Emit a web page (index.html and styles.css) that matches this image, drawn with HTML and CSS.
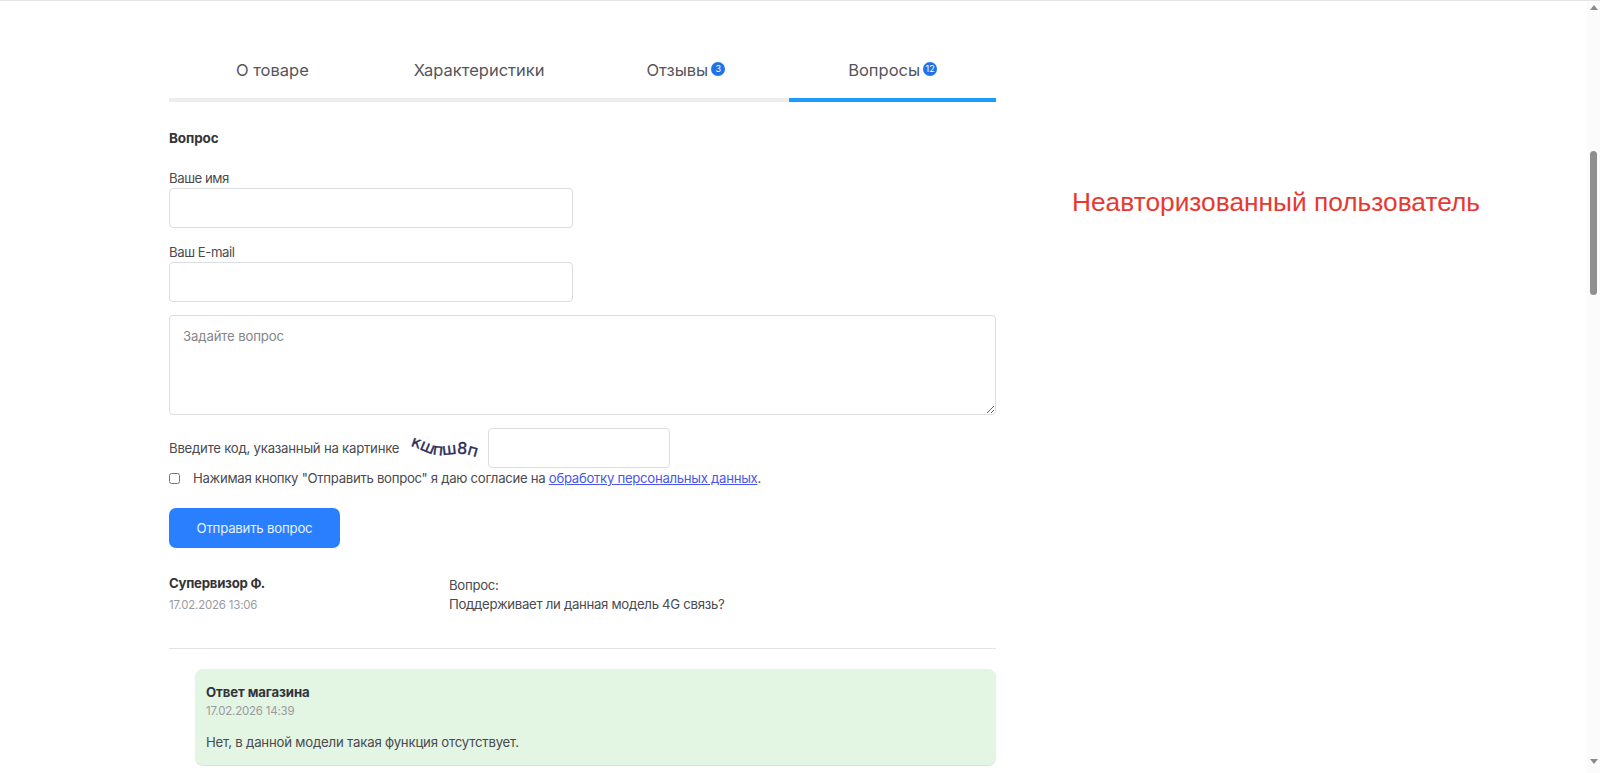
FILE: index.html
```html
<!DOCTYPE html>
<html lang="ru">
<head>
<meta charset="utf-8">
<title>Вопросы</title>
<link rel="stylesheet" href="styles.css">
</head>
<body>
<div class="page">
  <main class="content">
    <section class="product">
      <nav class="tabs">
        <a class="tab">О товаре</a>
        <a class="tab">Характеристики</a>
        <a class="tab">Отзывы<span class="badge">3</span></a>
        <a class="tab tab-active">Вопросы<span class="badge">12</span></a>
      </nav>
      <form class="form">
        <h3 class="form-title">Вопрос</h3>
        <label class="field-label">Ваше имя</label>
        <input class="input input-half" type="text">
        <label class="field-label field-email">Ваш E-mail</label>
        <input class="input input-half" type="text">
        <textarea class="textarea" placeholder="Задайте вопрос"></textarea>
        <div class="captcha-row">
          <span class="captcha-label">Введите код, указанный на картинке</span>
          <svg class="captcha" width="76" height="30" viewBox="0 0 76 30">
            <path id="cw" d="M3 13 C 16 16, 24 24, 38 22 S 60 20, 76 27" fill="none"/>
            <text class="captcha-text"><textPath href="#cw">кшпш8п</textPath></text>
          </svg>
          <input class="input input-code" type="text">
        </div>
        <label class="agree">
          <input class="check" type="checkbox">
          <span>Нажимая кнопку "Отправить вопрос" я даю согласие на <a class="link">обработку персональных данных</a>.</span>
        </label>
        <button class="submit" type="button">Отправить вопрос</button>
      </form>
      <article class="question">
        <div class="author">
          <div class="author-name">Супервизор Ф.</div>
          <div class="date">17.02.2026 13:06</div>
        </div>
        <div class="question-body">
          <div>Вопрос:</div>
          <div>Поддерживает ли данная модель 4G связь?</div>
        </div>
      </article>
      <div class="answer">
        <div class="answer-title">Ответ магазина</div>
        <div class="date">17.02.2026 14:39</div>
        <p class="answer-text">Нет, в данной модели такая функция отсутствует.</p>
      </div>
    </section>
    <aside class="note">Неавторизованный пользователь</aside>
  </main>
  <div class="scrollbar">
    <span class="arrow arrow-up"></span>
    <span class="thumb"></span>
    <span class="arrow arrow-down"></span>
  </div>
</div>
</body>
</html>
```
FILE: styles.css
```css
* { box-sizing: border-box; }
html, body { margin: 0; height: 100%; overflow: hidden; }
body {
  font-family: Inter, "Noto Sans", "Liberation Sans", sans-serif;
  font-size: 13.2px;
  letter-spacing: -0.3px;
  color: #4a4a4f;
  background: #fff;
}
.page {
  display: flex;
  height: 773px;
  border-top: 1px solid #e4e4e4;
}
.content {
  flex: 1;
  display: flex;
  padding: 43px 0 0 169px;
  min-width: 0;
}
.product { width: 827px; flex: none; }
.note {
  margin: 142px 0 0 76px;
  font-family: "Liberation Sans", Arial, sans-serif;
  font-size: 26.3px;
  line-height: 32px;
  letter-spacing: 0;
  color: #e8392f;
  white-space: nowrap;
}
.tabs { display: flex; height: 58px; }
.tab {
  flex: 1;
  display: flex;
  justify-content: center;
  align-items: flex-start;
  padding-top: 16px;
  font-size: 16.5px;
  line-height: 20px;
  letter-spacing: 0;
  color: #55555a;
  border-bottom: 4px solid #ededf0;
}
.tab-active { border-bottom-color: #1e9bff; }
.badge {
  display: flex;
  align-items: center;
  justify-content: center;
  min-width: 14px;
  height: 14px;
  margin: 2px 0 0 3px;
  padding: 0 2px;
  border-radius: 7px;
  background: #1f72ea;
  color: #fff;
  font-size: 9px;
  line-height: 14px;
}
.form { display: flex; flex-direction: column; align-items: flex-start; }
.form-title {
  margin: 27px 0 0;
  font-size: 13.5px;
  line-height: 18px;
  font-weight: 700;
  letter-spacing: -0.1px;
  color: #333338;
}
.field-label { margin-top: 22px; line-height: 18px; letter-spacing: -0.45px; }
.field-email { margin-top: 15px; }
.input {
  display: block;
  height: 40px;
  margin: 0;
  padding: 0 12px;
  border: 1px solid #dcdde0;
  border-radius: 4px;
  background: #fff;
}
.input-half { width: 404px; margin-top: 1px; }
.textarea {
  display: block;
  width: 827px;
  height: 100px;
  margin-top: 13px;
  padding: 12px 13px;
  border: 1px solid #dcdde0;
  border-radius: 4px;
  font: inherit;
  letter-spacing: -0.15px;
}
.textarea::placeholder { color: #85858a; opacity: 1; }
.captcha-row { display: flex; align-items: center; margin-top: 13px; height: 40px; }
.captcha-label { white-space: nowrap; letter-spacing: -0.24px; }
.captcha { margin: 0 5px 0 8px; flex: none; overflow: visible; }
.captcha-text {
  font-family: "DejaVu Sans", sans-serif;
  font-size: 16px;
  letter-spacing: -0.3px;
  fill: #2c2c5a;
  stroke: #2c2c5a;
  stroke-width: 0.4px;
}
.input-code { width: 182px; }
.agree { display: flex; align-items: center; height: 20px; white-space: nowrap; }
.check { width: 11px; height: 11px; margin: 0 13px 0 0; }
.link { color: #4a55ee; text-decoration: underline; }
.submit {
  width: 171px;
  height: 40px;
  margin-top: 20px;
  border: 0;
  border-radius: 7px;
  background: #2a7fff;
  color: #e8f1ff;
  font: inherit;
  letter-spacing: -0.2px;
}
.question {
  display: flex;
  height: 76px;
  margin-top: 25px;
  border-bottom: 1px solid #e2e3e5;
}
.author { width: 280px; flex: none; }
.author-name { font-weight: 700; line-height: 20px; letter-spacing: -0.25px; color: #333338; }
.date { margin-top: 4px; font-size: 11.5px; line-height: 16px; letter-spacing: -0.2px; color: #9a9a9f; }
.question-body { line-height: 19px; padding-top: 3px; }
.answer {
  height: 96px;
  margin: 20px 0 0 26px;
  padding: 13px 11px;
  border-radius: 8px;
  background: #e3f5e3;
  box-shadow: 0 1px 1px #dcdcdc;
}
.answer-title { font-weight: 700; line-height: 20px; letter-spacing: -0.1px; color: #333338; }
.answer .date { margin-top: 1px; }
.answer-text { margin: 14px 0 0; line-height: 18px; letter-spacing: -0.2px; }
.scrollbar {
  flex: none;
  width: 13px;
  margin-left: auto;
  display: flex;
  flex-direction: column;
  align-items: center;
  padding-top: 4px;
  background: #fbfbfb;
}
.arrow { width: 0; height: 0; border-left: 4px solid transparent; border-right: 4px solid transparent; }
.arrow-up { border-bottom: 5px solid #8b8b8b; }
.arrow-down { border-top: 5px solid #8b8b8b; }
.thumb { width: 7px; height: 144px; margin: 141px 0 464px; border-radius: 4px; background: #8f8f8f; }
```
